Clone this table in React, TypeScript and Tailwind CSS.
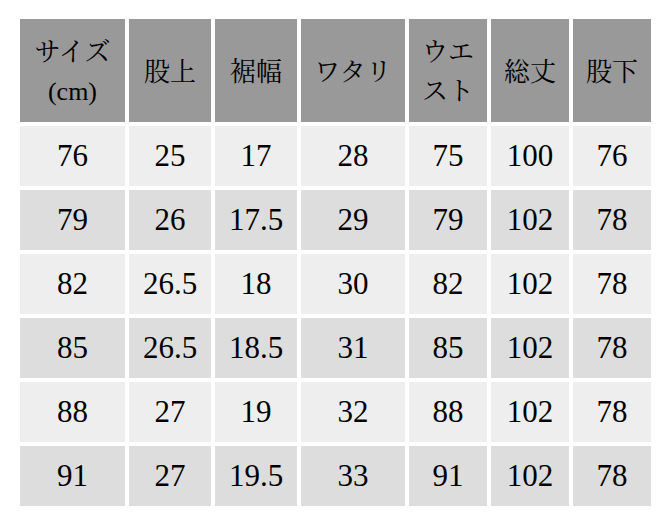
const headers: React.ReactNode[] = [
  <>
    サイズ
    <br />
    (cm)
  </>,
  "股上",
  "裾幅",
  "ワタリ",
  <>
    ウエ
    <br />
    スト
  </>,
  "総丈",
  "股下",
];

const rows = [
  ["76", "25", "17", "28", "75", "100", "76"],
  ["79", "26", "17.5", "29", "79", "102", "78"],
  ["82", "26.5", "18", "30", "82", "102", "78"],
  ["85", "26.5", "18.5", "31", "85", "102", "78"],
  ["88", "27", "19", "32", "88", "102", "78"],
  ["91", "27", "19.5", "33", "91", "102", "78"],
];

export default function App() {
  return (
    <div className="h-[524px] w-[667px] bg-white pl-[20px] pt-[19px] font-['Liberation_Serif','Noto_Serif_CJK_JP','Noto_Sans_CJK_JP',serif] text-black">
      <div className="grid grid-cols-[105px_82px_82px_104px_78px_78px_78px] grid-rows-[103px_repeat(6,60px)] gap-[4px]">
        {headers.map((h, i) => (
          <div
            key={i}
            className="flex items-center justify-center bg-[#999999] pt-[3px] text-center text-[26px] leading-[39px]"
          >
            <span>{h}</span>
          </div>
        ))}
        {rows.map((row, r) =>
          row.map((v, c) => (
            <div
              key={`${r}-${c}`}
              className={`flex items-center justify-center text-[31px] ${
                r % 2 === 0 ? "bg-[#eeeeee]" : "bg-[#dddddd]"
              }`}
            >
              {v}
            </div>
          ))
        )}
      </div>
    </div>
  );
}
